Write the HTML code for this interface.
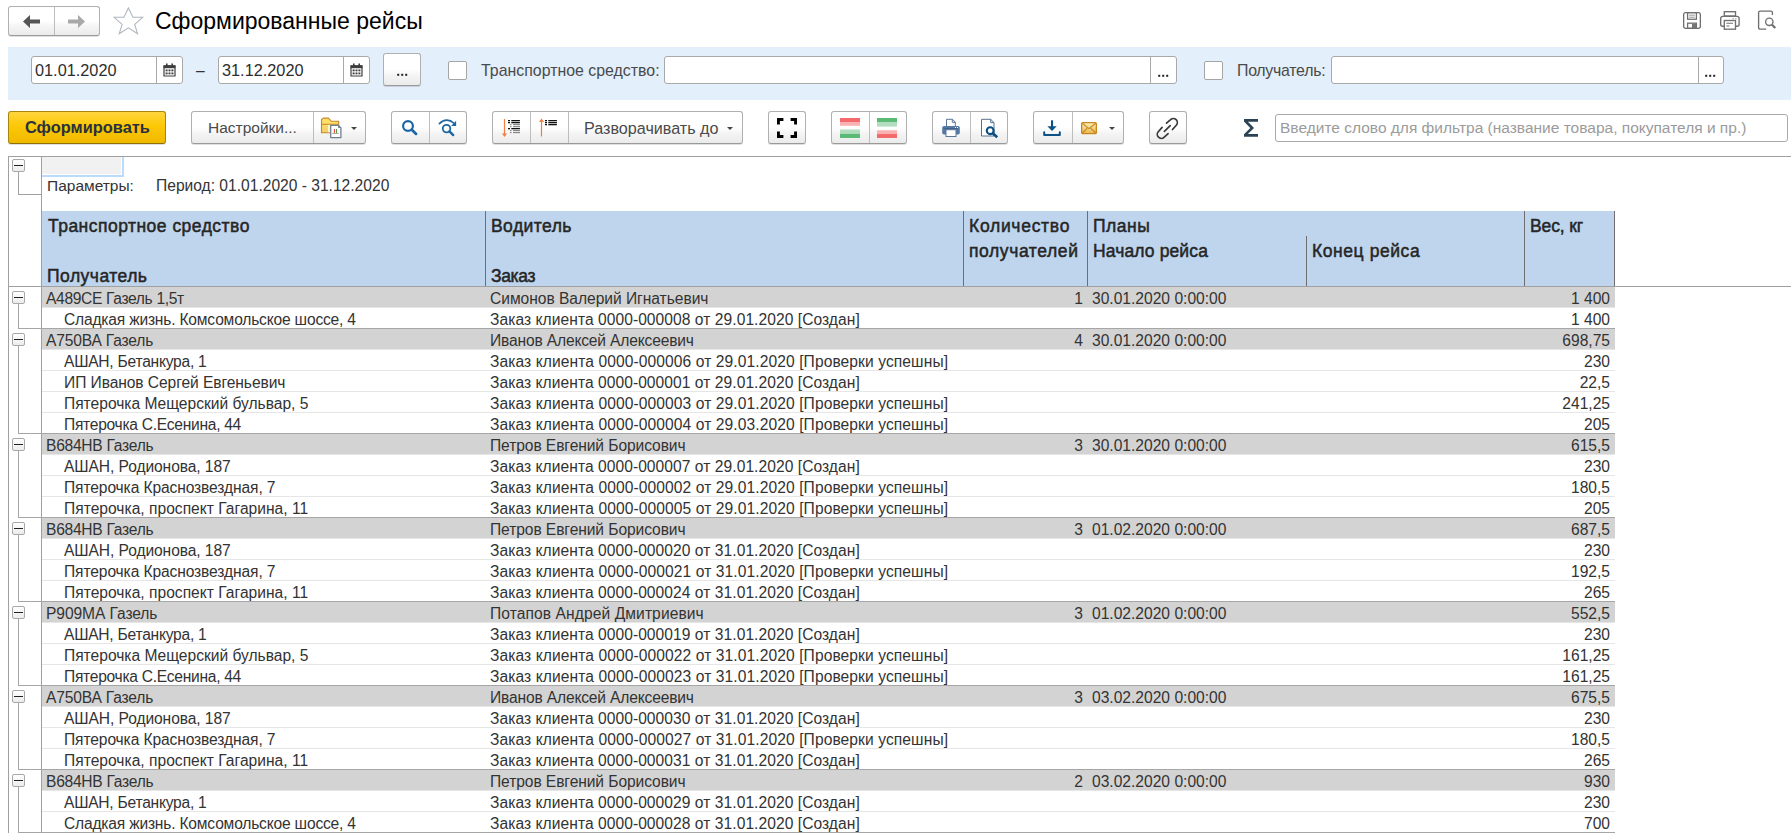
<!DOCTYPE html>
<html><head><meta charset="utf-8">
<style>
*{box-sizing:border-box;margin:0;padding:0}
html,body{width:1791px;height:833px;overflow:hidden;background:#fff}
body{position:relative;font-family:"Liberation Sans",sans-serif;color:#333}
.a{position:absolute;white-space:nowrap}
.btn{position:absolute;border:1px solid #b0b0b0;border-bottom-color:#9a9a9a;border-radius:3px;background:linear-gradient(#fff 0%,#fff 48%,#f4f4f4 70%,#ebebeb 100%);box-shadow:0 1px 0 rgba(0,0,0,.12)}
.dv{position:absolute;top:0;bottom:0;width:1px;background:#bdbdbd}
.inp{position:absolute;background:#fff;border:1px solid #a9a9a9;border-radius:3px}
.chk{position:absolute;width:19px;height:19px;background:#fff;border:1px solid #a5a5a5;border-radius:2px}
.tri{position:absolute;width:0;height:0;border-left:3px solid transparent;border-right:3px solid transparent;border-top:3px solid #444}
.r{position:absolute;left:0;width:1791px;height:21px}
.t{position:absolute;font-size:15.6px;line-height:21px;margin-top:1px;white-space:nowrap;color:#333}
.h{position:absolute;font-size:17.5px;font-weight:normal;line-height:25px;white-space:nowrap;color:#262626;-webkit-text-stroke:.5px #262626}
.ln{position:absolute;height:1px}
.vl{position:absolute;width:1px}
.tog{position:absolute;left:12px;width:13px;height:13px;border:1px solid #a8a8a8;border-radius:2px;background:linear-gradient(#fff,#ececec)}
.tog:after{content:"";position:absolute;left:1px;top:5px;width:9px;height:1px;background:#222}
</style></head><body>

<!-- ===== Top bar ===== -->
<div class="btn" style="left:8px;top:6px;width:92px;height:30px">
  <div class="dv" style="left:45px"></div>
  <svg class="a" style="left:14px;top:8px" width="18" height="14" viewBox="0 0 18 14"><path d="M0 6.5 L7 0 V4.5 H17 V8.5 H7 V13 Z" fill="#555"/></svg>
  <svg class="a" style="left:58px;top:8px" width="18" height="14" viewBox="0 0 18 14"><path d="M18 6.5 L11 0 V4.5 H1 V8.5 H11 V13 Z" fill="#a9a9a9"/></svg>
</div>
<svg class="a" style="left:113px;top:7px" width="31" height="29" viewBox="0 0 31 29"><path d="M15.4 0.9 L19.9 10.3 L29.7 10.3 L21.7 17.4 L24.6 26.8 L15.4 20.9 L6.2 26.8 L9.1 17.4 L1.1 10.3 L10.9 10.3 Z" fill="none" stroke="#adb5be" stroke-width="1.05" stroke-linejoin="miter"/></svg>
<div class="a" style="left:155px;top:6px;font-size:23px;line-height:30px;color:#000">Сформированные рейсы</div>

<!-- top right icons -->
<svg class="a" style="left:1682px;top:11px" width="20" height="19" viewBox="0 0 20 19" fill="none" stroke="#707070" stroke-width="1.3">
  <rect x="1.65" y="1.65" width="16.7" height="15.7" rx="2"/>
  <rect x="5.6" y="1.65" width="8.8" height="6.6"/>
  <path d="M7.2 4.2h5.6M7.2 6.2h5.6" stroke-width=".9" stroke="#8a8a8a"/>
  <rect x="5.6" y="12.2" width="8.8" height="5.1"/>
  <rect x="10" y="13" width="4" height="4" fill="#777" stroke="none"/>
</svg>
<svg class="a" style="left:1719px;top:10px" width="22" height="21" viewBox="0 0 22 21" fill="none" stroke="#707070" stroke-width="1.35">
  <rect x="5.3" y="1.7" width="11.2" height="4.3"/>
  <path d="M5.2 16.2H3.6a1.9 1.9 0 0 1-1.9-1.9V8.3a1.9 1.9 0 0 1 1.9-1.9h14.6a1.9 1.9 0 0 1 1.9 1.9v6a1.9 1.9 0 0 1-1.9 1.9H16.6"/>
  <rect x="5.3" y="10.5" width="11.2" height="8.7"/>
  <path d="M7.4 13.3h6.6M7.4 16h3" stroke-width="1.1"/>
  <path d="M13.4 8.7h1.6M16 8.7h1.6" stroke-width=".9" stroke="#999"/>
</svg>
<svg class="a" style="left:1757px;top:10px" width="21" height="21" viewBox="0 0 21 21" fill="none" stroke="#707070" stroke-width="1.35">
  <path d="M9.3 19.1H3a1.4 1.4 0 0 1-1.4-1.4V2.5A1.4 1.4 0 0 1 3 1.1h11a1.4 1.4 0 0 1 1.4 1.4V5"/>
  <circle cx="12.3" cy="11.8" r="3.7"/>
  <path d="M15 14.7l3.3 3.3" stroke-width="2.2"/>
</svg>

<!-- ===== Filter panel ===== -->
<div class="a" style="left:8px;top:47px;width:1783px;height:53px;background:#e3effb"></div>
<div class="inp" style="left:31px;top:56px;width:152px;height:28px">
  <div class="dv" style="left:124px;background:#a9a9a9"></div>
</div>
<div class="a" style="left:35px;top:57px;font-size:16.3px;line-height:27px;color:#2e2e2e">01.01.2020</div>
<svg class="a" style="left:163px;top:63px" width="13" height="14" viewBox="0 0 13 14"><path d="M1 3h11v10H1z" fill="#fff" stroke="#3e3e3e" stroke-width="1.2"/><rect x="0.6" y="2.2" width="11.8" height="3" fill="#3e3e3e"/><rect x="3" y="0.5" width="1.6" height="3" fill="#3e3e3e"/><rect x="8.4" y="0.5" width="1.6" height="3" fill="#3e3e3e"/><g fill="#3e3e3e"><rect x="2.6" y="6.5" width="2" height="1.8"/><rect x="5.5" y="6.5" width="2" height="1.8"/><rect x="8.4" y="6.5" width="2" height="1.8"/><rect x="2.6" y="9.5" width="2" height="1.8"/><rect x="5.5" y="9.5" width="2" height="1.8"/><rect x="8.4" y="9.5" width="2" height="1.8"/></g></svg>
<div class="a" style="left:196px;top:57px;font-size:15.6px;line-height:27px;color:#333">–</div>
<div class="inp" style="left:218px;top:56px;width:152px;height:28px">
  <div class="dv" style="left:124px;background:#a9a9a9"></div>
</div>
<div class="a" style="left:222px;top:57px;font-size:16.3px;line-height:27px;color:#2e2e2e">31.12.2020</div>
<svg class="a" style="left:350px;top:63px" width="13" height="14" viewBox="0 0 13 14"><path d="M1 3h11v10H1z" fill="#fff" stroke="#3e3e3e" stroke-width="1.2"/><rect x="0.6" y="2.2" width="11.8" height="3" fill="#3e3e3e"/><rect x="3" y="0.5" width="1.6" height="3" fill="#3e3e3e"/><rect x="8.4" y="0.5" width="1.6" height="3" fill="#3e3e3e"/><g fill="#3e3e3e"><rect x="2.6" y="6.5" width="2" height="1.8"/><rect x="5.5" y="6.5" width="2" height="1.8"/><rect x="8.4" y="6.5" width="2" height="1.8"/><rect x="2.6" y="9.5" width="2" height="1.8"/><rect x="5.5" y="9.5" width="2" height="1.8"/><rect x="8.4" y="9.5" width="2" height="1.8"/></g></svg>
<div class="btn" style="left:383px;top:53px;width:38px;height:33px"></div>
<svg class="a" style="left:397px;top:73px" width="11" height="4"><rect x="0.2" y="0.8" width="2" height="2" fill="#222"/><rect x="4.2" y="0.8" width="2" height="2" fill="#222"/><rect x="8.2" y="0.8" width="2" height="2" fill="#222"/></svg>

<div class="chk" style="left:448px;top:61px"></div>
<div class="a" style="left:481px;top:57px;font-size:15.9px;line-height:27px;color:#4a4a4a">Транспортное средство:</div>
<div class="inp" style="left:664px;top:56px;width:513px;height:28px">
  <div class="dv" style="left:485px;background:#a9a9a9"></div>
</div>
<svg class="a" style="left:1158px;top:74px" width="11" height="4"><rect x="0.2" y="0.8" width="2" height="2" fill="#222"/><rect x="4.2" y="0.8" width="2" height="2" fill="#222"/><rect x="8.2" y="0.8" width="2" height="2" fill="#222"/></svg>

<div class="chk" style="left:1204px;top:61px"></div>
<div class="a" style="left:1237px;top:57px;font-size:15.9px;line-height:27px;color:#4a4a4a;letter-spacing:-.27px">Получатель:</div>
<div class="inp" style="left:1331px;top:56px;width:393px;height:28px">
  <div class="dv" style="left:366px;background:#a9a9a9"></div>
</div>
<svg class="a" style="left:1705px;top:74px" width="11" height="4"><rect x="0.2" y="0.8" width="2" height="2" fill="#222"/><rect x="4.2" y="0.8" width="2" height="2" fill="#222"/><rect x="8.2" y="0.8" width="2" height="2" fill="#222"/></svg>

<!-- ===== Toolbar ===== -->
<div class="a" style="left:8px;top:111px;width:158px;height:33px;border:1px solid #a8860c;border-bottom-color:#8e7006;border-radius:3px;background:linear-gradient(#ffd53e,#fdc805 45%,#f0b900);box-shadow:0 1px 0 rgba(0,0,0,.12)"></div>
<div class="a" style="left:25px;top:112px;font-size:16.4px;font-weight:bold;line-height:30px;color:#2b3040">Сформировать</div>

<div class="btn" style="left:191px;top:111px;width:175px;height:33px">
  <div class="dv" style="left:121px"></div>
</div>
<div class="a" style="left:208px;top:112.5px;font-size:15.5px;line-height:30px;color:#4a4a4a">Настройки...</div>
<svg class="a" style="left:316px;top:114px" width="30" height="26" viewBox="0 0 30 26">
  <defs><linearGradient id="fg" x1="0" y1="0" x2="0" y2="1"><stop offset="0" stop-color="#ffe36a"/><stop offset="1" stop-color="#f4cf6a"/></linearGradient></defs>
  <path d="M5.5 18.7V5.6L7.6 4.1H12.4L15.4 7.3H22.7V18.7Z" fill="url(#fg)" stroke="#c8862a" stroke-width="1.1"/>
  <path d="M5.5 10.3H22.7" stroke="#c8862a" stroke-width="1"/>
  <rect x="12" y="10.9" width="10.2" height="7.3" fill="#fff3c8"/>
  <path d="M14.7 11.3H22.2L24.9 14V23.6H14.7Z" fill="#fff" stroke="#6f8190" stroke-width="1.3" stroke-linejoin="round"/>
  <path d="M22.2 11.3V14H24.9Z" fill="#6f8190"/>
  <path d="M18.4 15v4M20.5 15v4" stroke-width="1"/>
  <path d="M18.4 15v4" stroke="#e23a2a" stroke-width="1"/><path d="M20.5 15v4" stroke="#48a040" stroke-width="1"/>
  <path d="M16.2 19.5h6.5" stroke="#9a9a9a" stroke-width=".8"/>
</svg>
<div class="tri" style="left:351px;top:127px"></div>

<div class="btn" style="left:391px;top:111px;width:76px;height:33px">
  <div class="dv" style="left:37px"></div>
</div>
<svg class="a" style="left:400px;top:118px" width="20" height="20" viewBox="0 0 20 20" fill="none" stroke="#1b66a4">
  <circle cx="8" cy="8" r="4.9" stroke-width="2.2"/>
  <path d="M11.8 11.8l4.3 4.1" stroke-width="2.7" stroke-linecap="round"/>
</svg>
<svg class="a" style="left:437px;top:117px" width="22" height="21" viewBox="0 0 22 21" fill="none" stroke="#1b66a4">
  <circle cx="9.55" cy="11.6" r="3.75" stroke-width="1.8"/>
  <path d="M12.5 14.4l3.7 3.7" stroke-width="2.4" stroke-linecap="round"/>
  <path d="M2.4 6.6C5.5 3.6 8 3 10 3.1C12.5 3.2 14.8 4.3 16.6 6" stroke-width="1.7" stroke-linecap="round"/>
  <path d="M14.2 8.9H19.1V3.8Z" fill="#1b66a4" stroke="none"/>
</svg>

<div class="btn" style="left:492px;top:111px;width:251px;height:33px">
  <div class="dv" style="left:37px"></div>
  <div class="dv" style="left:75px"></div>
</div>
<svg class="a" style="left:501px;top:118px" width="22" height="20" viewBox="0 0 22 20">
  <path d="M3.5 1v15" stroke="#f07e3e" stroke-width="1.2"/><path d="M1 15.5h5L3.5 19z" fill="#f07e3e"/>
  <g fill="#111"><rect x="7" y="2" width="2" height="1.3"/><rect x="10.3" y="2" width="8.6" height="1.3"/><rect x="7" y="4" width="2" height="1.3"/><rect x="10.3" y="4" width="8.6" height="1.3"/><rect x="7" y="10" width="2" height="1.3"/><rect x="10.3" y="10" width="8.6" height="1.3"/></g>
  <g fill="#8a8a8a"><rect x="9" y="6" width="1.5" height="1.2"/><rect x="12" y="6" width="7" height="1.2"/><rect x="9" y="8" width="1.5" height="1.2"/><rect x="12" y="8" width="7" height="1.2"/><rect x="9" y="12" width="1.5" height="1.2"/><rect x="12" y="12" width="7" height="1.2"/><rect x="9" y="14" width="1.5" height="1.2"/><rect x="12" y="14" width="7" height="1.2"/></g>
</svg>
<svg class="a" style="left:538px;top:118px" width="22" height="20" viewBox="0 0 22 20">
  <path d="M3.5 3.5v15" stroke="#f07e3e" stroke-width="1.2"/><path d="M1 4h5L3.5 0.5z" fill="#f07e3e"/>
  <g fill="#111"><rect x="7" y="2" width="2" height="1.3"/><rect x="10.3" y="2" width="8.6" height="1.3"/><rect x="7" y="4" width="2" height="1.3"/><rect x="10.3" y="4" width="8.6" height="1.3"/><rect x="7" y="6" width="2" height="1.3"/><rect x="10.3" y="6" width="8.6" height="1.3"/></g>
</svg>
<div class="a" style="left:584px;top:113px;font-size:16.15px;line-height:30px;color:#4a4a4a">Разворачивать до</div>
<div class="tri" style="left:727px;top:127px"></div>

<div class="btn" style="left:768px;top:111px;width:38px;height:33px"></div>
<svg class="a" style="left:776px;top:117px" width="22" height="22" viewBox="0 0 22 22" fill="none" stroke="#000" stroke-width="2.9">
  <path d="M2.45 7.4V2.45H7.4M14.6 2.45H19.55V7.4M19.55 14.6V19.55H14.6M7.4 19.55H2.45V14.6"/>
</svg>

<div class="btn" style="left:831px;top:111px;width:76px;height:33px">
  <div class="dv" style="left:37px"></div>
</div>
<svg class="a" style="left:840px;top:118px" width="20" height="20" viewBox="0 0 20 20">
  <rect x="0" y="0" width="20" height="4" fill="#f46a6a"/><rect x="0" y="4" width="20" height="3.8" fill="#f8b2b4"/>
  <rect x="0" y="11.5" width="20" height="4.3" fill="#b2ddbf"/><rect x="0" y="15.8" width="20" height="4.2" fill="#5cba77"/>
</svg>
<svg class="a" style="left:877px;top:118px" width="20" height="20" viewBox="0 0 20 20">
  <rect x="0" y="0" width="20" height="4" fill="#5cba77"/><rect x="0" y="4" width="20" height="4.6" fill="#b2ddbf"/>
  <rect x="0" y="12.3" width="20" height="3.7" fill="#f8b2b4"/><rect x="0" y="16" width="20" height="4" fill="#f46a6a"/>
</svg>

<div class="btn" style="left:932px;top:111px;width:76px;height:33px">
  <div class="dv" style="left:37px"></div>
</div>
<svg class="a" style="left:941px;top:118px" width="20" height="20" viewBox="0 0 20 20">
  <path d="M5.5 1.3h6l2.8 2.8V9h-8.8z" fill="#fff" stroke="#5a7696" stroke-width="1"/>
  <path d="M11.3 1.3V4.3H14.3" fill="none" stroke="#5a7696" stroke-width="1"/>
  <rect x="1.2" y="8" width="17.6" height="8.6" rx="1.8" fill="#5479a5"/>
  <rect x="3.2" y="10" width="13.6" height="1" fill="#3e628d"/>
  <rect x="5" y="11.7" width="10" height="6.8" fill="#fff" stroke="#5a7696" stroke-width="1"/>
  <rect x="14" y="9" width="1" height="1" fill="#fff"/><rect x="16" y="9" width="1" height="1" fill="#fff"/>
</svg>
<svg class="a" style="left:980px;top:118px" width="20" height="20" viewBox="0 0 20 20">
  <path d="M1.5 1.3h9.2l3.3 3.3v13.4H1.5z" fill="#fff" stroke="#58708e" stroke-width="1"/>
  <path d="M10.7 1.3V4.6H14" fill="none" stroke="#58708e" stroke-width="1"/>
  <circle cx="10.2" cy="12.7" r="3.4" fill="none" stroke="#0b4f82" stroke-width="2.1"/>
  <path d="M12.7 15.3l4.5 4" stroke="#0b4f82" stroke-width="2.6"/>
</svg>

<div class="btn" style="left:1033px;top:111px;width:91px;height:33px">
  <div class="dv" style="left:38px"></div>
</div>
<svg class="a" style="left:1042px;top:119px" width="20" height="18" viewBox="0 0 20 18">
  <rect x="9" y="1.3" width="2.1" height="7" fill="#0d5286"/><path d="M5.4 7.3H14.7L10.05 12z" fill="#0d5286"/>
  <path d="M2.2 13.3V15.9H17.8V13.3" fill="none" stroke="#0d5286" stroke-width="2" stroke-linecap="round" stroke-linejoin="round"/>
</svg>
<svg class="a" style="left:1080px;top:121px" width="18" height="14" viewBox="0 0 18 14">
  <defs><linearGradient id="eg" x1="0" y1="0" x2="0" y2="1"><stop offset="0" stop-color="#fff3bd"/><stop offset="1" stop-color="#e9b54e"/></linearGradient></defs>
  <rect x="1.65" y="1.55" width="14.7" height="11.1" rx="1.2" fill="url(#eg)" stroke="#c8861e" stroke-width="1.3"/>
  <path d="M2.3 2.2L9 7.6L15.7 2.2M2.4 12L7.3 7.1M15.6 12L10.7 7.1" fill="none" stroke="#c8861e" stroke-width="1.1"/>
</svg>
<div class="tri" style="left:1109px;top:127px"></div>

<div class="btn" style="left:1149px;top:111px;width:38px;height:33px"></div>
<svg class="a" style="left:1152px;top:114px" width="32" height="28" viewBox="0 0 32 28" fill="none" stroke="#3a3a3a" stroke-width="1.7" stroke-linecap="round">
  <path d="M14.5 9.2L18.6 5.6A4 4 0 0 1 24.3 11.2L20.5 15.5"/>
  <path d="M12.4 17.3L18.2 11.6"/>
  <path d="M10.1 13.4L6.3 17.7A4 4 0 0 0 12 23.3L16.1 19.7"/>
</svg>

<svg class="a" style="left:1244px;top:119px" width="14" height="18" viewBox="0 0 14 18"><path d="M0 0H14V2.7H3.9L10 8.9L3.9 15.1H14V17.8H0V15.2L6.3 8.9L0 2.6Z" fill="#2c4255"/></svg>
<div class="inp" style="left:1275px;top:114px;width:513px;height:28px"></div>
<div class="a" style="left:1280px;top:114px;font-size:15.5px;line-height:28px;color:#9b9b9b">Введите слово для фильтра (название товара, покупателя и пр.)</div>

<!-- ===== Report ===== -->
<div class="ln" style="left:8px;top:156px;width:1783px;background:#a0a0a0"></div>
<div class="vl" style="left:8px;top:156px;height:677px;background:#a0a0a0"></div>
<div class="vl" style="left:41px;top:156px;height:677px;background:#a0a0a0"></div>
<div class="a" style="left:42px;top:157px;width:82px;height:20px;background:#b9dcfb"></div>
<div class="a" style="left:42px;top:157px;width:80px;height:18px;background:#fff"></div>
<div class="a" style="left:42px;top:157px;width:79px;height:17px;background:#f1f1f1"></div>
<div class="tog" style="top:159px"></div>
<div class="vl" style="left:18px;top:172px;height:23px;background:#a0a0a0"></div>
<div class="ln" style="left:18px;top:194px;width:23px;background:#a0a0a0"></div>
<div class="a" style="left:47px;top:175px;font-size:15.5px;line-height:21px;color:#333">Параметры:</div>
<div class="a" style="left:156px;top:175px;font-size:15.6px;line-height:21px;color:#333">Период: 01.01.2020 - 31.12.2020</div>

<!-- header -->
<div class="a" style="left:42px;top:211px;width:1573px;height:75px;background:#bfd5ed"></div>
<div class="vl" style="left:485px;top:211px;height:75px;background:#6e6e6e"></div>
<div class="vl" style="left:963px;top:211px;height:75px;background:#6e6e6e"></div>
<div class="vl" style="left:1087px;top:211px;height:75px;background:#6e6e6e"></div>
<div class="vl" style="left:1306px;top:236px;height:50px;background:#6e6e6e"></div>
<div class="vl" style="left:1524px;top:211px;height:75px;background:#6e6e6e"></div>
<div class="vl" style="left:1614px;top:211px;height:75px;background:#6e6e6e"></div>
<div class="ln" style="left:8px;top:286px;width:1783px;background:#a0a0a0"></div>

<div class="h" style="left:48px;top:214px;letter-spacing:0.480px">Транспортное средство</div>
<div class="h" style="left:47px;top:264px;letter-spacing:0.478px">Получатель</div>
<div class="h" style="left:491px;top:214px;letter-spacing:0.443px">Водитель</div>
<div class="h" style="left:491px;top:264px;letter-spacing:-0.350px">Заказ</div>
<div class="h" style="left:969px;top:214px;letter-spacing:0.711px">Количество</div>
<div class="h" style="left:969px;top:239px;letter-spacing:0.600px">получателей</div>
<div class="h" style="left:1093px;top:214px;letter-spacing:0.500px">Планы</div>
<div class="h" style="left:1093px;top:239px;letter-spacing:0.118px">Начало рейса</div>
<div class="h" style="left:1312px;top:239px;letter-spacing:0.570px">Конец рейса</div>
<div class="h" style="left:1530px;top:214px;letter-spacing:-0.133px">Вес, кг</div>

<div>
<div class="a" style="left:42px;top:287px;width:1573px;height:20px;background:#d3d3d3"></div>
<div class="ln" style="left:42px;top:307px;width:1573px;background:#e6e6e6"></div>
<div class="t" style="left:46px;top:287px;letter-spacing:-0.341px">А489СЕ Газель 1,5т</div>
<div class="t" style="left:490px;top:287px;letter-spacing:-0.04px">Симонов Валерий Игнатьевич</div>
<div class="t" style="right:708px;top:287px">1</div>
<div class="t" style="left:1092px;top:287px">30.01.2020 0:00:00</div>
<div class="t" style="right:181px;top:287px">1 400</div>
<div class="tog" style="top:291px"></div>
<div class="vl" style="left:18px;top:304px;height:24px;background:#a6a6a6"></div>
<div class="ln" style="left:18px;top:328px;width:1597px;background:#a6a6a6"></div>
<div class="t" style="left:64px;top:308px;letter-spacing:-0.197px">Сладкая жизнь. Комсомольское шоссе, 4</div>
<div class="t" style="left:490px;top:308px;letter-spacing:0.051px">Заказ клиента 0000-000008 от 29.01.2020 [Создан]</div>
<div class="t" style="right:181px;top:308px">1 400</div>
<div class="a" style="left:42px;top:329px;width:1573px;height:20px;background:#d3d3d3"></div>
<div class="ln" style="left:42px;top:349px;width:1573px;background:#e6e6e6"></div>
<div class="t" style="left:46px;top:329px;letter-spacing:-0.183px">А750ВА Газель</div>
<div class="t" style="left:490px;top:329px;letter-spacing:-0.167px">Иванов Алексей Алексеевич</div>
<div class="t" style="right:708px;top:329px">4</div>
<div class="t" style="left:1092px;top:329px">30.01.2020 0:00:00</div>
<div class="t" style="right:181px;top:329px">698,75</div>
<div class="tog" style="top:333px"></div>
<div class="vl" style="left:18px;top:346px;height:87px;background:#a6a6a6"></div>
<div class="ln" style="left:42px;top:370px;width:1573px;background:#e6e6e6"></div>
<div class="t" style="left:64px;top:350px;letter-spacing:-0.247px">АШАН, Бетанкура, 1</div>
<div class="t" style="left:490px;top:350px;letter-spacing:0.086px">Заказ клиента 0000-000006 от 29.01.2020 [Проверки успешны]</div>
<div class="t" style="right:181px;top:350px">230</div>
<div class="ln" style="left:42px;top:391px;width:1573px;background:#e6e6e6"></div>
<div class="t" style="left:64px;top:371px;letter-spacing:-0.081px">ИП Иванов Сергей Евгеньевич</div>
<div class="t" style="left:490px;top:371px;letter-spacing:0.051px">Заказ клиента 0000-000001 от 29.01.2020 [Создан]</div>
<div class="t" style="right:181px;top:371px">22,5</div>
<div class="ln" style="left:42px;top:412px;width:1573px;background:#e6e6e6"></div>
<div class="t" style="left:64px;top:392px;letter-spacing:-0.017px">Пятерочка Мещерский бульвар, 5</div>
<div class="t" style="left:490px;top:392px;letter-spacing:0.086px">Заказ клиента 0000-000003 от 29.01.2020 [Проверки успешны]</div>
<div class="t" style="right:181px;top:392px">241,25</div>
<div class="ln" style="left:18px;top:433px;width:1597px;background:#a6a6a6"></div>
<div class="t" style="left:64px;top:413px;letter-spacing:-0.282px">Пятерочка С.Есенина, 44</div>
<div class="t" style="left:490px;top:413px;letter-spacing:0.086px">Заказ клиента 0000-000004 от 29.03.2020 [Проверки успешны]</div>
<div class="t" style="right:181px;top:413px">205</div>
<div class="a" style="left:42px;top:434px;width:1573px;height:20px;background:#d3d3d3"></div>
<div class="ln" style="left:42px;top:454px;width:1573px;background:#e6e6e6"></div>
<div class="t" style="left:46px;top:434px;letter-spacing:-0.267px">В684НВ Газель</div>
<div class="t" style="left:490px;top:434px;letter-spacing:-0.087px">Петров Евгений Борисович</div>
<div class="t" style="right:708px;top:434px">3</div>
<div class="t" style="left:1092px;top:434px">30.01.2020 0:00:00</div>
<div class="t" style="right:181px;top:434px">615,5</div>
<div class="tog" style="top:438px"></div>
<div class="vl" style="left:18px;top:451px;height:66px;background:#a6a6a6"></div>
<div class="ln" style="left:42px;top:475px;width:1573px;background:#e6e6e6"></div>
<div class="t" style="left:64px;top:455px;letter-spacing:-0.084px">АШАН, Родионова, 187</div>
<div class="t" style="left:490px;top:455px;letter-spacing:0.051px">Заказ клиента 0000-000007 от 29.01.2020 [Создан]</div>
<div class="t" style="right:181px;top:455px">230</div>
<div class="ln" style="left:42px;top:496px;width:1573px;background:#e6e6e6"></div>
<div class="t" style="left:64px;top:476px;letter-spacing:-0.115px">Пятерочка Краснозвездная, 7</div>
<div class="t" style="left:490px;top:476px;letter-spacing:0.086px">Заказ клиента 0000-000002 от 29.01.2020 [Проверки успешны]</div>
<div class="t" style="right:181px;top:476px">180,5</div>
<div class="ln" style="left:18px;top:517px;width:1597px;background:#a6a6a6"></div>
<div class="t" style="left:64px;top:497px;letter-spacing:0.01px">Пятерочка, проспект Гагарина, 11</div>
<div class="t" style="left:490px;top:497px;letter-spacing:0.086px">Заказ клиента 0000-000005 от 29.01.2020 [Проверки успешны]</div>
<div class="t" style="right:181px;top:497px">205</div>
<div class="a" style="left:42px;top:518px;width:1573px;height:20px;background:#d3d3d3"></div>
<div class="ln" style="left:42px;top:538px;width:1573px;background:#e6e6e6"></div>
<div class="t" style="left:46px;top:518px;letter-spacing:-0.267px">В684НВ Газель</div>
<div class="t" style="left:490px;top:518px;letter-spacing:-0.087px">Петров Евгений Борисович</div>
<div class="t" style="right:708px;top:518px">3</div>
<div class="t" style="left:1092px;top:518px">01.02.2020 0:00:00</div>
<div class="t" style="right:181px;top:518px">687,5</div>
<div class="tog" style="top:522px"></div>
<div class="vl" style="left:18px;top:535px;height:66px;background:#a6a6a6"></div>
<div class="ln" style="left:42px;top:559px;width:1573px;background:#e6e6e6"></div>
<div class="t" style="left:64px;top:539px;letter-spacing:-0.084px">АШАН, Родионова, 187</div>
<div class="t" style="left:490px;top:539px;letter-spacing:0.051px">Заказ клиента 0000-000020 от 31.01.2020 [Создан]</div>
<div class="t" style="right:181px;top:539px">230</div>
<div class="ln" style="left:42px;top:580px;width:1573px;background:#e6e6e6"></div>
<div class="t" style="left:64px;top:560px;letter-spacing:-0.115px">Пятерочка Краснозвездная, 7</div>
<div class="t" style="left:490px;top:560px;letter-spacing:0.086px">Заказ клиента 0000-000021 от 31.01.2020 [Проверки успешны]</div>
<div class="t" style="right:181px;top:560px">192,5</div>
<div class="ln" style="left:18px;top:601px;width:1597px;background:#a6a6a6"></div>
<div class="t" style="left:64px;top:581px;letter-spacing:0.01px">Пятерочка, проспект Гагарина, 11</div>
<div class="t" style="left:490px;top:581px;letter-spacing:0.051px">Заказ клиента 0000-000024 от 31.01.2020 [Создан]</div>
<div class="t" style="right:181px;top:581px">265</div>
<div class="a" style="left:42px;top:602px;width:1573px;height:20px;background:#d3d3d3"></div>
<div class="ln" style="left:42px;top:622px;width:1573px;background:#e6e6e6"></div>
<div class="t" style="left:46px;top:602px;letter-spacing:-0.092px">Р909МА Газель</div>
<div class="t" style="left:490px;top:602px;letter-spacing:0.083px">Потапов Андрей Дмитриевич</div>
<div class="t" style="right:708px;top:602px">3</div>
<div class="t" style="left:1092px;top:602px">01.02.2020 0:00:00</div>
<div class="t" style="right:181px;top:602px">552,5</div>
<div class="tog" style="top:606px"></div>
<div class="vl" style="left:18px;top:619px;height:66px;background:#a6a6a6"></div>
<div class="ln" style="left:42px;top:643px;width:1573px;background:#e6e6e6"></div>
<div class="t" style="left:64px;top:623px;letter-spacing:-0.247px">АШАН, Бетанкура, 1</div>
<div class="t" style="left:490px;top:623px;letter-spacing:0.051px">Заказ клиента 0000-000019 от 31.01.2020 [Создан]</div>
<div class="t" style="right:181px;top:623px">230</div>
<div class="ln" style="left:42px;top:664px;width:1573px;background:#e6e6e6"></div>
<div class="t" style="left:64px;top:644px;letter-spacing:-0.017px">Пятерочка Мещерский бульвар, 5</div>
<div class="t" style="left:490px;top:644px;letter-spacing:0.086px">Заказ клиента 0000-000022 от 31.01.2020 [Проверки успешны]</div>
<div class="t" style="right:181px;top:644px">161,25</div>
<div class="ln" style="left:18px;top:685px;width:1597px;background:#a6a6a6"></div>
<div class="t" style="left:64px;top:665px;letter-spacing:-0.282px">Пятерочка С.Есенина, 44</div>
<div class="t" style="left:490px;top:665px;letter-spacing:0.086px">Заказ клиента 0000-000023 от 31.01.2020 [Проверки успешны]</div>
<div class="t" style="right:181px;top:665px">161,25</div>
<div class="a" style="left:42px;top:686px;width:1573px;height:20px;background:#d3d3d3"></div>
<div class="ln" style="left:42px;top:706px;width:1573px;background:#e6e6e6"></div>
<div class="t" style="left:46px;top:686px;letter-spacing:-0.183px">А750ВА Газель</div>
<div class="t" style="left:490px;top:686px;letter-spacing:-0.167px">Иванов Алексей Алексеевич</div>
<div class="t" style="right:708px;top:686px">3</div>
<div class="t" style="left:1092px;top:686px">03.02.2020 0:00:00</div>
<div class="t" style="right:181px;top:686px">675,5</div>
<div class="tog" style="top:690px"></div>
<div class="vl" style="left:18px;top:703px;height:66px;background:#a6a6a6"></div>
<div class="ln" style="left:42px;top:727px;width:1573px;background:#e6e6e6"></div>
<div class="t" style="left:64px;top:707px;letter-spacing:-0.084px">АШАН, Родионова, 187</div>
<div class="t" style="left:490px;top:707px;letter-spacing:0.051px">Заказ клиента 0000-000030 от 31.01.2020 [Создан]</div>
<div class="t" style="right:181px;top:707px">230</div>
<div class="ln" style="left:42px;top:748px;width:1573px;background:#e6e6e6"></div>
<div class="t" style="left:64px;top:728px;letter-spacing:-0.115px">Пятерочка Краснозвездная, 7</div>
<div class="t" style="left:490px;top:728px;letter-spacing:0.086px">Заказ клиента 0000-000027 от 31.01.2020 [Проверки успешны]</div>
<div class="t" style="right:181px;top:728px">180,5</div>
<div class="ln" style="left:18px;top:769px;width:1597px;background:#a6a6a6"></div>
<div class="t" style="left:64px;top:749px;letter-spacing:0.01px">Пятерочка, проспект Гагарина, 11</div>
<div class="t" style="left:490px;top:749px;letter-spacing:0.051px">Заказ клиента 0000-000031 от 31.01.2020 [Создан]</div>
<div class="t" style="right:181px;top:749px">265</div>
<div class="a" style="left:42px;top:770px;width:1573px;height:20px;background:#d3d3d3"></div>
<div class="ln" style="left:42px;top:790px;width:1573px;background:#e6e6e6"></div>
<div class="t" style="left:46px;top:770px;letter-spacing:-0.267px">В684НВ Газель</div>
<div class="t" style="left:490px;top:770px;letter-spacing:-0.087px">Петров Евгений Борисович</div>
<div class="t" style="right:708px;top:770px">2</div>
<div class="t" style="left:1092px;top:770px">03.02.2020 0:00:00</div>
<div class="t" style="right:181px;top:770px">930</div>
<div class="tog" style="top:774px"></div>
<div class="vl" style="left:18px;top:787px;height:46px;background:#a6a6a6"></div>
<div class="ln" style="left:42px;top:811px;width:1573px;background:#e6e6e6"></div>
<div class="t" style="left:64px;top:791px;letter-spacing:-0.247px">АШАН, Бетанкура, 1</div>
<div class="t" style="left:490px;top:791px;letter-spacing:0.051px">Заказ клиента 0000-000029 от 31.01.2020 [Создан]</div>
<div class="t" style="right:181px;top:791px">230</div>
<div class="ln" style="left:18px;top:832px;width:1597px;background:#a6a6a6"></div>
<div class="t" style="left:64px;top:812px;letter-spacing:-0.197px">Сладкая жизнь. Комсомольское шоссе, 4</div>
<div class="t" style="left:490px;top:812px;letter-spacing:0.051px">Заказ клиента 0000-000028 от 31.01.2020 [Создан]</div>
<div class="t" style="right:181px;top:812px">700</div>
</div>
</body></html>
